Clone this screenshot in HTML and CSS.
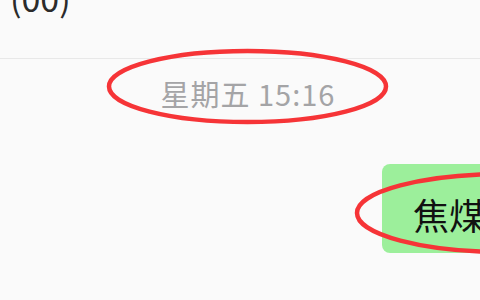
FILE: index.html
```html
<!DOCTYPE html>
<html lang="zh-CN">
<head>
    <meta charset="UTF-8">
    <meta name="viewport" content="width=device-width, initial-scale=1.0">
    <title>聊天</title>
    <link rel="stylesheet" href="styles.css">
</head>
<body>

<header class="chat-header">
    <div class="chat-title">(00)</div>
</header>

<div class="chat-body">
    <div class="chat-time">星期五 15:16</div>
    <div class="msg-row">
        <div class="bubble">焦煤</div>
    </div>
</div>

<svg class="marks" width="480" height="300" viewBox="0 0 480 300">
    <ellipse cx="247.5" cy="86.5" rx="138.5" ry="35.5" fill="none" stroke="#f63437" stroke-width="4.5"/>
    <ellipse cx="505" cy="213" rx="148" ry="39" fill="none" stroke="#f63437" stroke-width="4.5"/>
</svg>

</body>
</html>
```

FILE: styles.css
```css
* {
    margin: 0;
    padding: 0;
    box-sizing: border-box;
    font-family: "Noto Sans CJK SC", "Noto Sans", sans-serif;
}

body {
    background-color: #fafafa;
    width: 480px;
    height: 300px;
    overflow: hidden;
    position: relative;
}

.chat-header {
    display: flex;
    align-items: flex-start;
    height: 59px;
    border-bottom: 1px solid #e8e8e8;
    padding-left: 10px;
}

.chat-title {
    font-size: 34px;
    line-height: 34px;
    margin-top: -19px;
    color: #2b2b2b;
}

.chat-time {
    margin-top: 20px;
    text-align: center;
    font-size: 29px;
    line-height: 29px;
    letter-spacing: 1px;
    color: #a4a4a6;
    padding-left: 16px;
}

.msg-row {
    display: flex;
    justify-content: flex-end;
    margin-top: 56px;
}

.bubble {
    background: #9cef9b;
    border-radius: 8px;
    width: 140px;
    height: 89px;
    margin-right: -42px;
    padding: 32px 0 0 31px;
    font-size: 36px;
    line-height: 36px;
    color: #111;
    white-space: nowrap;
}

.marks {
    position: absolute;
    left: 0;
    top: 0;
}
```
